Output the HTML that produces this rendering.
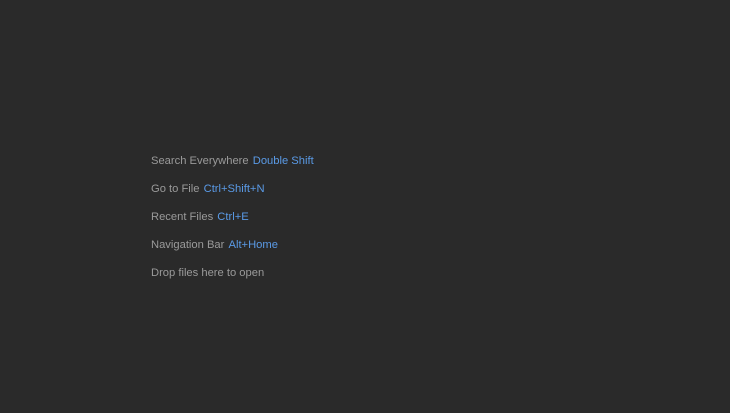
<!DOCTYPE html>
<html><head><style>
html,body{margin:0;padding:0;width:730px;height:413px;background:#2a2a2a;overflow:hidden}
.l{position:absolute;left:151px;font:11.2px "Liberation Sans",sans-serif;color:#9a9a9a;white-space:nowrap;line-height:14px}
.k{color:#5a9ae6;margin-left:1px}
</style></head><body>
<div class="l" style="top:154px">Search Everywhere <span class="k">Double Shift</span></div>
<div class="l" style="top:182px">Go to File <span class="k">Ctrl+Shift+N</span></div>
<div class="l" style="top:210px">Recent Files <span class="k">Ctrl+E</span></div>
<div class="l" style="top:238px">Navigation Bar <span class="k">Alt+Home</span></div>
<div class="l" style="top:266px">Drop files here to open</div>
</body></html>
